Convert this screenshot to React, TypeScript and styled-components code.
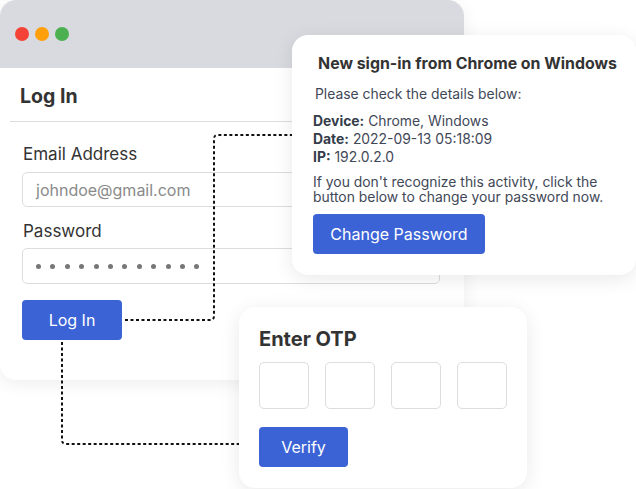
import styled, {createGlobalStyle} from "styled-components";

const GlobalStyle = createGlobalStyle`
    html, body {
        margin: 0;
        padding: 0;
        background: #ffffff;
    }
    body {
        font-family: Inter, "Noto Sans", "Liberation Sans", sans-serif;
        color: #333333;
        -webkit-font-smoothing: antialiased;
    }
`

const Stage = styled.div`
    position: relative;
    width: 636px;
    height: 489px;
    overflow: hidden;
    background: #ffffff;
`

const Window = styled.div`
    position: absolute;
    left: 0;
    top: 0;
    width: 464px;
    height: 380px;
    background: #ffffff;
    border-radius: 16px;
    overflow: hidden;
    box-shadow: 0 4px 18px rgba(0, 0, 0, 0.07);
    display: flex;
    flex-direction: column;
`

const TitleBar = styled.div`
    height: 68px;
    background: #d9dadf;
    display: flex;
    align-items: center;
    gap: 6px;
    padding-left: 15px;
    flex-shrink: 0;
`

const Light = styled.span<{ $color: string }>`
    width: 14px;
    height: 14px;
    border-radius: 50%;
    background: ${props => props.$color};
`

const WindowHeader = styled.h1`
    margin: 0 10px;
    height: 54px;
    padding: 3px 0 0 10px;
    box-sizing: border-box;
    display: flex;
    align-items: center;
    font-size: 19.5px;
    font-weight: 700;
    color: #333333;
    border-bottom: 1px solid #dedede;
`

const Form = styled.div`
    display: flex;
    flex-direction: column;
    padding: 21px 24px 0 22px;
`

const Label = styled.label<{ $gap: number }>`
    font-size: 17px;
    line-height: 22px;
    color: #333333;
    margin-bottom: ${props => props.$gap}px;
    padding-left: 1px;
`

const Field = styled.div<{ $h: number; $mb: number }>`
    height: ${props => props.$h}px;
    box-sizing: border-box;
    border: 1px solid #dcdcdc;
    border-radius: 5px;
    display: flex;
    align-items: center;
    padding-left: 13px;
    margin-bottom: ${props => props.$mb}px;
    font-size: 16px;
    color: #8a8a8a;
`

const Masked = styled.div`
    display: flex;
    gap: 9.4px;
`

const MaskDot = styled.span`
    width: 5px;
    height: 5px;
    border-radius: 50%;
    background: #777777;
`

const Button = styled.button<{ $w: number }>`
    width: ${props => props.$w}px;
    height: 40px;
    border: none;
    border-radius: 4px;
    background: #3b63d6;
    color: #ffffff;
    font-family: inherit;
    font-size: 16px;
    padding: 0;
    cursor: pointer;
`

const Connectors = styled.svg`
    position: absolute;
    left: 0;
    top: 0;
    pointer-events: none;
`

const Card = styled.div<{ $left: number; $top: number; $w: number; $h: number }>`
    position: absolute;
    left: ${props => props.$left}px;
    top: ${props => props.$top}px;
    width: ${props => props.$w}px;
    height: ${props => props.$h}px;
    box-sizing: border-box;
    background: #ffffff;
    border-radius: 16px;
    box-shadow: 0 4px 20px rgba(0, 0, 0, 0.09);
`

const Alert = styled(Card)`
    padding: 19px 0 0 21px;
    color: #3f4857;
`

const AlertTitle = styled.h2`
    margin: 0 0 14px;
    font-size: 15.9px;
    font-weight: 700;
    color: #333333;
    text-align: center;
    padding-right: 14px;
`

const Para = styled.p<{ $mb: number }>`
    margin: 0 0 ${props => props.$mb}px;
    font-size: 13.9px;
    line-height: 15px;
`

const Details = styled.div`
    font-size: 13.9px;
    line-height: 18px;
    margin-bottom: 9px;
    b {
        font-weight: 700;
        color: #343c4a;
    }
`

const Otp = styled(Card)`
    padding: 20px 0 0 20px;
`

const OtpTitle = styled.h2`
    margin: 0 0 11px;
    font-size: 20px;
    font-weight: 700;
    color: #333333;
    line-height: 24px;
`

const OtpRow = styled.div`
    display: flex;
    gap: 16px;
    margin-bottom: 18px;
`

const OtpBox = styled.div`
    width: 50px;
    height: 47px;
    box-sizing: border-box;
    border: 1px solid #dddddd;
    border-radius: 5px;
`

const App = () => {
    const lights = ["#f44336", "#ff9f0a", "#4caf50"]
    return (
        <Stage>
            <GlobalStyle/>
            <Window>
                <TitleBar>
                    {lights.map(c => <Light key={c} $color={c}/>)}
                </TitleBar>
                <WindowHeader>Log In</WindowHeader>
                <Form>
                    <Label $gap={7}>Email Address</Label>
                    <Field $h={35} $mb={13}>johndoe@gmail.com</Field>
                    <Label $gap={6}>Password</Label>
                    <Field $h={36} $mb={16}>
                        <Masked>
                            {Array.from({length: 12}).map((_, i) => <MaskDot key={i}/>)}
                        </Masked>
                    </Field>
                    <Button $w={100}>Log In</Button>
                </Form>
            </Window>

            {/* dotted connectors: login button -> popups */}
            <Connectors width="636" height="489" viewBox="0 0 636 489">
                <g fill="none" stroke="#111111" strokeWidth="2" strokeDasharray="3 2.5">
                    <path d="M125 320 H210 Q214 320 214 316 V139 Q214 135 218 135 H294"/>
                    <path d="M62 342 V440 Q62 444 66 444 H240"/>
                </g>
            </Connectors>

            <Alert $left={292} $top={35} $w={344} $h={240}>
                <AlertTitle>New sign-in from Chrome on Windows</AlertTitle>
                <Para $mb={10} style={{paddingLeft: 2}}>Please check the details below:</Para>
                <Details>
                    <div><b>Device:</b> Chrome, Windows</div>
                    <div><b>Date:</b> 2022-09-13 05:18:09</div>
                    <div><b>IP:</b> 192.0.2.0</div>
                </Details>
                <Para $mb={9}>
                    If you don't recognize this activity, click the<br/>
                    button below to change your password now.
                </Para>
                <Button $w={172}>Change Password</Button>
            </Alert>

            <Otp $left={239} $top={307} $w={288} $h={181}>
                <OtpTitle>Enter OTP</OtpTitle>
                <OtpRow>
                    {[0, 1, 2, 3].map(i => <OtpBox key={i}/>)}
                </OtpRow>
                <Button $w={89}>Verify</Button>
            </Otp>
        </Stage>
    )
}
export default App;
